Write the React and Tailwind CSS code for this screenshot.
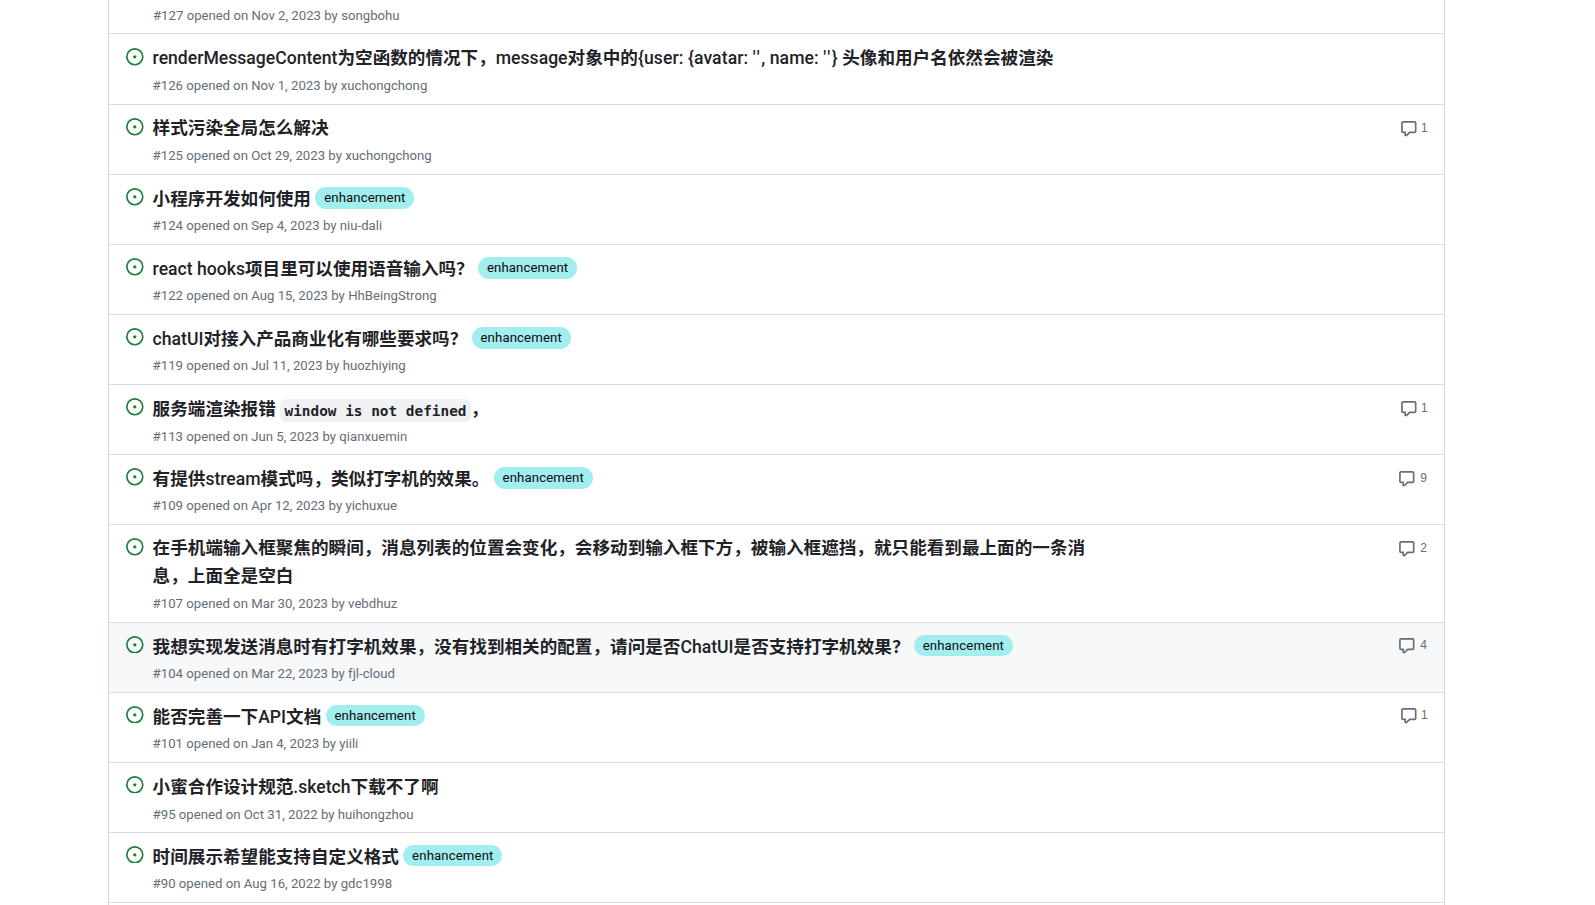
function Title({ s }) {
  return s.split(/([\x00-\x7f]+)/).filter(Boolean).map((p, i) =>
    /^[\x00-\x7f]/.test(p)
      ? <span key={i} className="font-medium">{p}</span>
      : <span key={i}>{p}</span>
  );
}

const rows = [
  { first: true, t: <>
      <Title s="renderMessageContent为空函数的情况下，message对象中的" />
      <span className="font-medium tracking-[0.1px]">{"{user: {avatar: "}<span className="tracking-[1.6px]">''</span>{", name: "}<span className="tracking-[1.6px]">''</span>{"} "}</span>
      <Title s="头像和用户名依然会被渲染" />
    </>, m: '#126 opened on Nov 1, 2023 by xuchongchong' },
  { s: '样式污染全局怎么解决', m: '#125 opened on Oct 29, 2023 by xuchongchong', c: 1 },
  { s: '小程序开发如何使用', m: '#124 opened on Sep 4, 2023 by niu-dali', e: true },
  { s: 'react hooks项目里可以使用语音输入吗？', m: '#122 opened on Aug 15, 2023 by HhBeingStrong', e: true },
  { s: 'chatUI对接入产品商业化有哪些要求吗？', m: '#119 opened on Jul 11, 2023 by huozhiying', e: true },
  { low: true, t: <>服务端渲染报错 <code className="rounded-[6px] bg-[#eff1f3] px-[4.4px] py-[3.5px] font-['DejaVu_Sans_Mono','Liberation_Mono',monospace] text-[14.4px] leading-none font-semibold">window is not defined</code>，</>, m: '#113 opened on Jun 5, 2023 by qianxuemin', c: 1 },
  { s: '有提供stream模式吗，类似打字机的效果。', m: '#109 opened on Apr 12, 2023 by yichuxue', e: true, c: 9 },
  { s: '在手机端输入框聚焦的瞬间，消息列表的位置会变化，会移动到输入框下方，被输入框遮挡，就只能看到最上面的一条消息，上面全是空白', m: '#107 opened on Mar 30, 2023 by vebdhuz', c: 2 },
  { s: '我想实现发送消息时有打字机效果，没有找到相关的配置，请问是否ChatUI是否支持打字机效果？', m: '#104 opened on Mar 22, 2023 by fjl-cloud', e: true, c: 4, hover: true },
  { s: '能否完善一下API文档', m: '#101 opened on Jan 4, 2023 by yiili', e: true, c: 1 },
  { low: true, s: '小蜜合作设计规范.sketch下载不了啊', m: '#95 opened on Oct 31, 2022 by huihongzhou' },
  { s: '时间展示希望能支持自定义格式', m: '#90 opened on Aug 16, 2022 by gdc1998', e: true },
];

function IssueIcon() {
  return (
    <svg width="17.6" height="17.6" viewBox="0 0 16 16" fill="#1a7f37" className="shrink-0">
      <path d="M8 9.5a1.5 1.5 0 1 0 0-3 1.5 1.5 0 0 0 0 3Z" />
      <path d="M8 0a8 8 0 1 1 0 16A8 8 0 0 1 8 0ZM1.5 8a6.5 6.5 0 1 0 13 0 6.5 6.5 0 0 0-13 0Z" />
    </svg>
  );
}

function CommentIcon() {
  return (
    <svg width="17.6" height="17.6" viewBox="0 0 16 16" fill="#656d76" className="shrink-0">
      <path d="M1 2.75C1 1.784 1.784 1 2.75 1h10.5c.966 0 1.75.784 1.75 1.75v7.5A1.75 1.75 0 0 1 13.25 12H9.06l-2.573 2.573A1.458 1.458 0 0 1 4 13.543V12H2.75A1.75 1.75 0 0 1 1 10.25Zm1.75-.25a.25.25 0 0 0-.25.25v7.5c0 .138.112.25.25.25h2a.75.75 0 0 1 .75.75v2.19l2.72-2.72a.749.749 0 0 1 .53-.22h4.5a.25.25 0 0 0 .25-.25v-7.5a.25.25 0 0 0-.25-.25Z" />
    </svg>
  );
}

function Row({ r }) {
  const pad = r.first ? 'pt-[11px] pb-[8px]' : r.low ? 'pt-[11px] pb-[7px]' : r.e ? 'pt-[11px] pb-[8px]' : 'pt-[10px] pb-[8px]';
  return (
    <div className={`flex border-t border-[#d8dee4] ${r.hover ? 'bg-[#f6f8fa]' : ''}`}>
      <div className={`pl-[17px] ${r.first ? 'pt-[14px]' : 'pt-[13.4px]'}`}><IssueIcon /></div>
      <div className={`w-[952px] pl-[9px] ${pad}`}>
        <div className="text-[17.6px] leading-[27.5px] font-semibold text-[#1f2328]">
          {r.s ? <Title s={r.s} /> : r.t}
          {r.e && <span className="ml-[4.4px] inline-block rounded-full bg-[#a2eeef] px-[8.8px] align-[3px] text-[13.2px] leading-[21.5px] font-normal tracking-[0.12px] text-[#0a0a0a]">enhancement</span>}
        </div>
        <div className={`text-[13.2px] leading-[20px] text-[#656d76] ${r.e ? 'mt-[2.5px]' : 'mt-[3.5px]'}`}>{r.m}</div>
      </div>
      {r.c && (
        <div className="ml-auto flex items-start gap-[3px] pt-[14.5px] pr-[17px] text-[12px] leading-[17.6px] text-[#656d76] font-['Liberation_Sans',sans-serif]">
          <CommentIcon />
          <span className={r.c === 1 ? 'w-[6px] text-right' : 'w-[8px] text-right'}>{r.c}</span>
        </div>
      )}
    </div>
  );
}

export default function App() {
  return (
    <div className="h-[905px] overflow-hidden bg-white font-['Roboto','Noto_Sans_CJK_SC',sans-serif]">
      <div className="ml-[108px] w-[1337px] border-x border-[#d0d7de]">
        <div className="h-[33px] pl-[44px] pt-[5.6px] text-[13.2px] leading-[20px] text-[#656d76]">#127 opened on Nov 2, 2023 by songbohu</div>
        {rows.map((r, i) => <Row key={i} r={r} />)}
        <div className="h-[10px] border-t border-[#d8dee4]" />
      </div>
    </div>
  );
}
